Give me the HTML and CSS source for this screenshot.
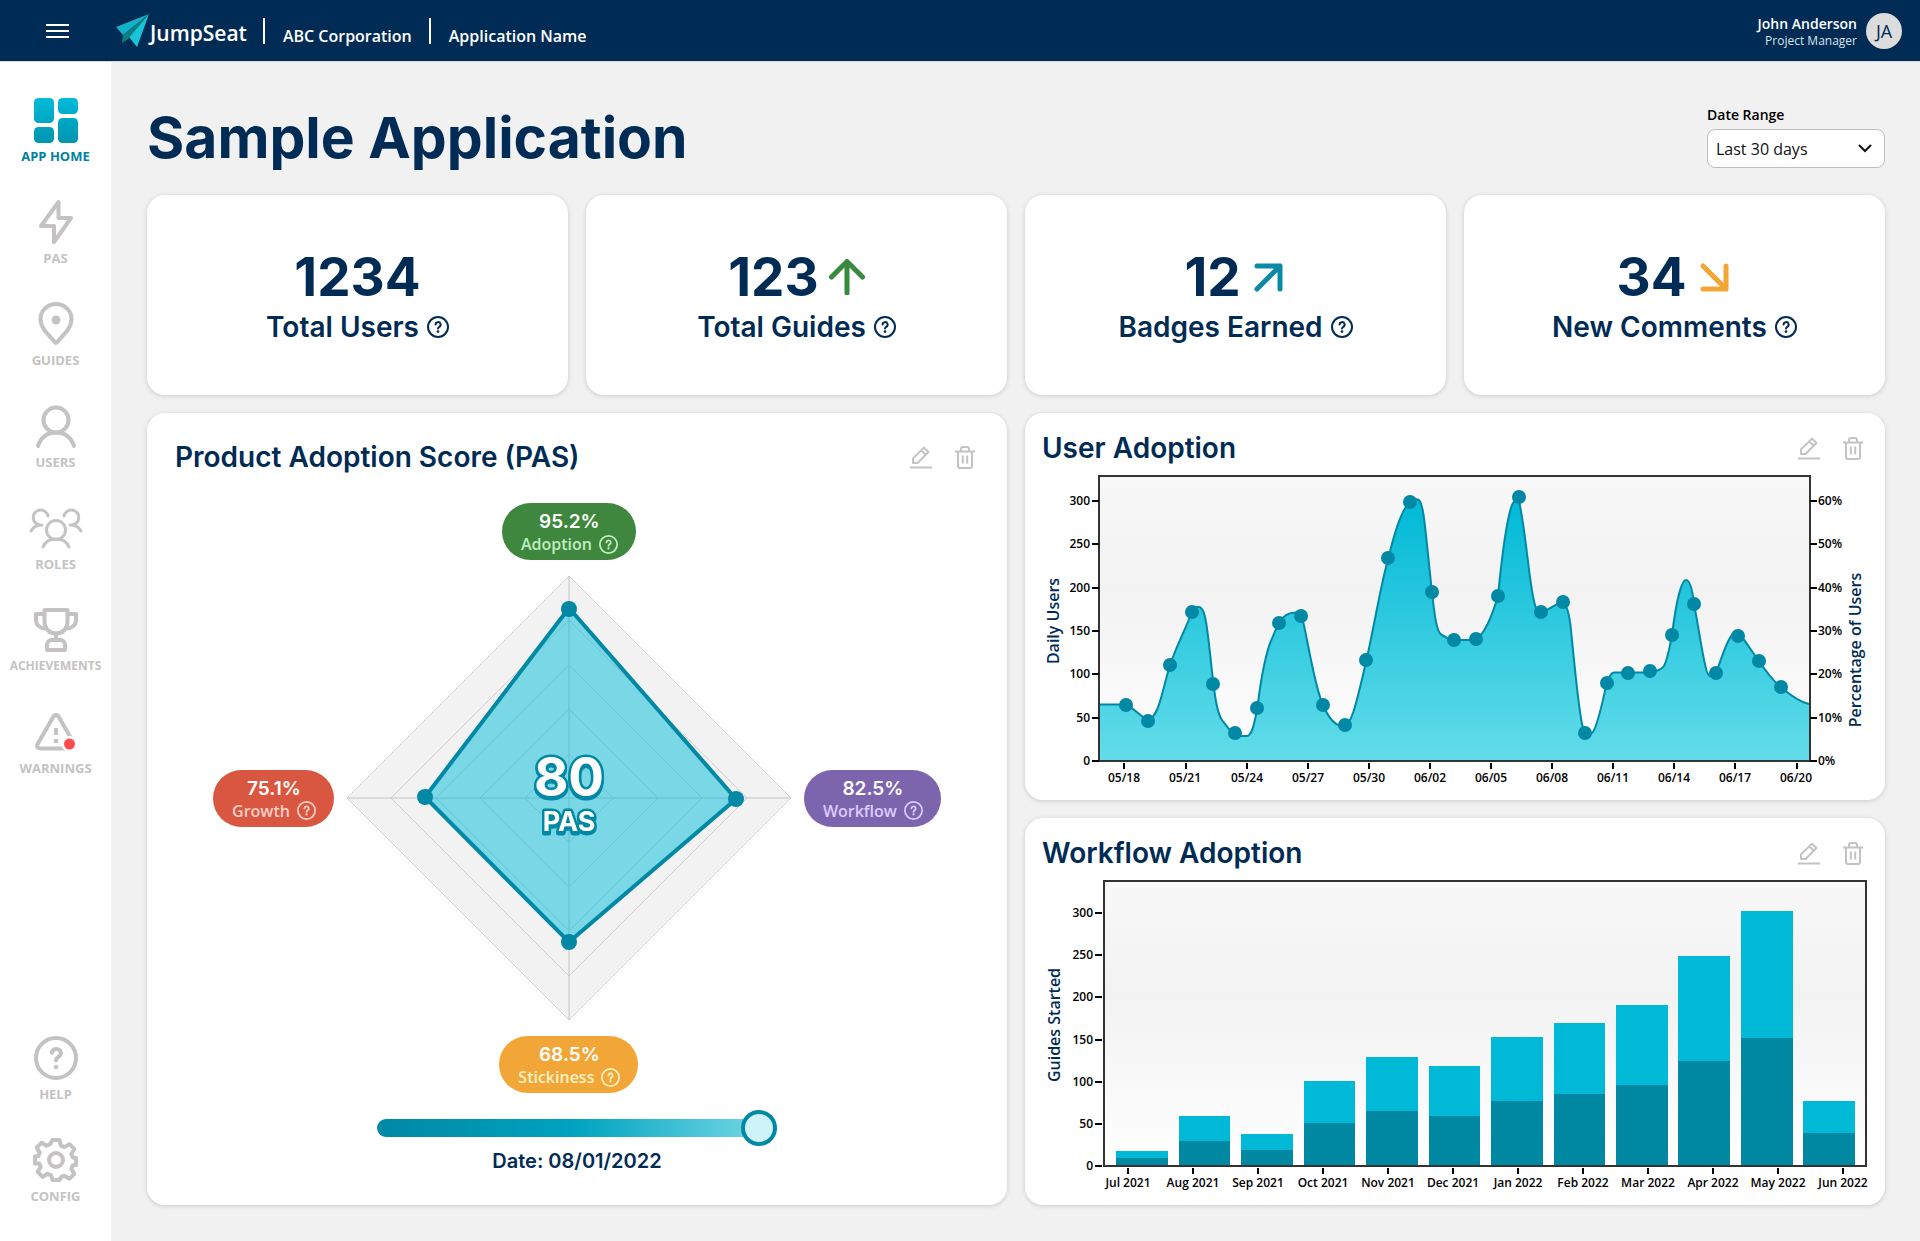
FILE: index.html
```html
<!DOCTYPE html>
<html lang="en">
<head>
<meta charset="utf-8">
<meta name="viewport" content="width=device-width, initial-scale=1">
<title>JumpSeat – Sample Application</title>
<link rel="stylesheet" href="styles.css">
</head>
<body>
<svg class="sprite" aria-hidden="true">
  <defs>
    <linearGradient id="homeFill" gradientUnits="userSpaceOnUse" x1="0" y1="0" x2="0" y2="44"><stop offset="0" stop-color="#00bbd9"/><stop offset="1" stop-color="#0095b1"/></linearGradient>
    <linearGradient id="plotBg" x1="0" y1="0" x2="0" y2="1"><stop offset="0" stop-color="#f8f8f8"/><stop offset=".4" stop-color="#f2f2f2"/><stop offset="1" stop-color="#fff"/></linearGradient>
    <linearGradient id="areaFill" x1="0" y1="0" x2="0" y2="1"><stop offset="0" stop-color="#00b9d6"/><stop offset="1" stop-color="#63dce9"/></linearGradient>
  </defs>
  <symbol id="i-help" viewBox="0 0 22 22"><g fill="none" stroke="currentColor" stroke-width="2" stroke-linecap="round"><circle cx="11" cy="11" r="10"/><path d="M8.6 8.6a2.5 2.5 0 1 1 3.7 2.2c-.9.5-1.3.9-1.3 1.8"/></g><circle cx="11" cy="15.6" r="1.3" fill="currentColor"/></symbol>
  <symbol id="i-edit" viewBox="0 0 22 23"><g fill="none" stroke="currentColor" stroke-width="2" stroke-linejoin="round"><path d="M3 17v-4.600L14 1.600l4.400 4.400L7.600 17zM11.300 4.300l4.400 4.400"/><path d="M0 21.500h22"/></g></symbol>
  <symbol id="i-trash" viewBox="0 0 20 23"><g fill="none" stroke="currentColor" stroke-width="2" stroke-linejoin="round"><path d="M0 5.500h20M6 5V3a2 2 0 0 1 2-2h4a2 2 0 0 1 2 2v2M3 5.500V20a2 2 0 0 0 2 2h10a2 2 0 0 0 2-2V5.500M7.800 9.500v8M12.200 9.500v8"/></g></symbol>
</svg>

<header class="topbar">
  <button class="menu-btn" type="button" aria-label="Menu"><svg width="24" height="16" viewBox="0 0 24 16"><path d="M0 2h23M0 8h23M0 14h23" stroke="#fff" stroke-width="2"/></svg></button>
  <a class="brand" href="#">
    <svg width="34" height="34" viewBox="0 0 34 34"><path d="M33 0 0 13l7 8z" fill="#12b3c9"/><path d="M33 0 7 21l-1 8 5-5z" fill="#0c7f83"/><path d="M33 0 11 24l3-1z" fill="#085f5e"/><path d="M33 0 13 23l8 10z" fill="#18c4da"/><path d="M33 0 6 29l6-4z" fill="#118a80"/></svg>
    <span>JumpSeat</span>
  </a>
  <nav class="crumbs" aria-label="Context"><a href="#">ABC Corporation</a><a href="#">Application Name</a></nav>
  <div class="user">
    <div class="user-text"><strong>John Anderson</strong><span>Project Manager</span></div>
    <span class="avatar">JA</span>
  </div>
</header>

<div class="layout">
  <nav class="sidebar" aria-label="Main">
    <a class="nav-item active" href="#"><svg viewBox="0 0 44 44"><g fill="url(#homeFill)"><rect x="0" y="0" width="20" height="25" rx="4.500"/><rect x="24" y="0" width="20" height="16" rx="4.500"/><rect x="0" y="29" width="20" height="16" rx="4.500"/><rect x="24" y="20" width="20" height="25" rx="4.500"/></g></svg>APP HOME</a>
    <a class="nav-item" href="#"><svg viewBox="0 0 44 44"><path d="M24.500 2v16H37L20 42V26H7z"/></svg>PAS</a>
    <a class="nav-item" href="#"><svg viewBox="0 0 44 44"><path d="M22 41C15 33.500 6.500 26.500 6.500 17a15.500 15 0 0 1 31 0C37.500 26.500 29 33.500 22 41z"/><circle cx="22" cy="18" r="4.500" class="solid"/></svg>GUIDES</a>
    <a class="nav-item" href="#"><svg viewBox="0 0 44 44"><circle cx="22" cy="16" r="12.500"/><path d="M4 42c3-9 9-13.500 18-13.500S37 33 40 42" stroke-linecap="round"/></svg>USERS</a>
    <a class="nav-item" href="#"><svg class="wide" viewBox="0 0 54 44"><g class="thin"><circle cx="27" cy="24" r="9.500"/><path d="M14 41c2-5 6-8 13-8s11 3 13 8M19 10a7.500 7.500 0 1 0-8 9M2 25c2-4 5-6 11-6M35 10a7.500 7.500 0 1 1 8 9M52 25c-2-4-5-6-11-6"/></g></svg>ROLES</a>
    <a class="nav-item long" href="#"><svg viewBox="0 0 44 44"><path d="M10.500 2h23v11c0 8-5 12.500-11.500 12.500S10.500 21 10.500 13zM10 6H2v6c0 5 4 8.500 9.500 8.500M34 6h8v6c0 5-4 8.500-9.500 8.500M22 26v6M13 42v-5c0-3 2-5 5-5h8c3 0 5 2 5 5v5z"/></svg>ACHIEVEMENTS</a>
    <a class="nav-item" href="#"><svg viewBox="0 0 44 44"><path d="M19.500 6.500 3.600 34c-1.200 2.200 0 4.400 2.400 4.400h32c2.400 0 3.600-2.200 2.400-4.400L24.500 6.500c-1.200-2-3.800-2-5 0zM22 18v7"/><path d="M20 29h4v4h-4z" class="solid"/><circle cx="35.500" cy="34" r="8" class="halo"/><circle cx="35.500" cy="34" r="5.500" class="dot"/></svg>WARNINGS</a>
    <a class="nav-item bottom" href="#"><svg viewBox="0 0 44 44"><circle cx="22" cy="22" r="20"/><path d="M17.800 16.800c.6-2.500 2.400-3.800 4.600-3.800 2.600 0 4.600 1.800 4.600 4.200 0 3.800-5 3.700-5 7.300" stroke-linecap="round"/><circle cx="22" cy="31" r="2.300" class="solid"/></svg>HELP</a>
    <a class="nav-item" href="#"><svg viewBox="0 0 44 44"><path d="M18.500 2h7l1.400 5.600 3.500 1.500 5-3 4.900 4.900-3 5 1.500 3.500 3.200.4v7l-3.200.4-1.500 3.500 3 5-4.900 4.900-5-3-3.500 1.500L25.500 42h-7l-1.400-4.700-3.500-1.500-5 3-4.900-4.900 3-5-1.500-3.500L1 25.500v-7l3.200-.4 1.500-3.500-3-5 4.900-4.900 5 3 3.500-1.500z"/><circle cx="22" cy="22" r="7"/></svg>CONFIG</a>
  </nav>

  <main class="main">
    <div class="page-head">
      <h1>Sample Application</h1>
      <div class="range">
        <label for="range">Date Range</label>
        <div class="select-box">
          <select id="range"><option>Last 30 days</option><option>Last 60 days</option><option>Last 90 days</option></select>
          <svg width="14" height="9" viewBox="0 0 14 9" aria-hidden="true"><path d="M1.500 1.500 7 7l5.500-5.500" fill="none" stroke="#111" stroke-width="2" stroke-linecap="round"/></svg>
        </div>
      </div>
    </div>

    <div class="grid">
      <section class="card stat">
        <div class="value">1234</div>
        <div class="caption">Total Users <button type="button" class="help" aria-label="About total users"><svg><use href="#i-help"/></svg></button></div>
      </section>
      <section class="card stat">
        <div class="value">123 <svg class="up" viewBox="0 0 36 36"><path d="M18 34V2.500M2.500 18 18 2.500 33.500 18"/></svg></div>
        <div class="caption">Total Guides <button type="button" class="help" aria-label="About total guides"><svg><use href="#i-help"/></svg></button></div>
      </section>
      <section class="card stat">
        <div class="value">12 <svg class="flat" viewBox="0 0 36 36"><path d="M6 30 29 7M6 7h23v23"/></svg></div>
        <div class="caption">Badges Earned <button type="button" class="help" aria-label="About badges earned"><svg><use href="#i-help"/></svg></button></div>
      </section>
      <section class="card stat">
        <div class="value">34 <svg class="down" viewBox="0 0 36 36"><path d="M6 7l23 23M6 30h23V7"/></svg></div>
        <div class="caption">New Comments <button type="button" class="help" aria-label="About new comments"><svg><use href="#i-help"/></svg></button></div>
      </section>

      <section class="card pas">
        <div class="card-head">
          <h2>Product Adoption Score (PAS)</h2>
          <button type="button" class="tool" aria-label="Edit"><svg width="22" height="23"><use href="#i-edit"/></svg></button>
          <button type="button" class="tool" aria-label="Delete"><svg width="20" height="23"><use href="#i-trash"/></svg></button>
        </div>
        <div class="radar-grid">
          <div class="pill adoption"><strong>95.2%</strong><span>Adoption <svg><use href="#i-help"/></svg></span></div>
          <div class="pill growth"><strong>75.1%</strong><span>Growth <svg><use href="#i-help"/></svg></span></div>
          <svg class="radar" viewBox="0 0 444 444" role="img" aria-label="PAS 80">
            <g fill="#f2f2f2" stroke="#d3d1d1">
              <path d="M222 0 444 222 222 444 0 222z"/>
              <path d="M222 44 400 222 222 400 44 222zM222 89 355 222 222 355 89 222zM222 133 311 222 222 311 133 222zM222 178 266 222 222 266 178 222z" fill="none"/>
              <path d="M222 0v444M0 222h444" stroke="#c4c4c4"/>
            </g>
            <path d="M222 32 389 223 222 366 78 221z" fill="#00bbd9" fill-opacity=".5" stroke="#0088a5" stroke-width="4"/>
            <g fill="#0088a5"><circle cx="222" cy="33" r="8"/><circle cx="389" cy="223" r="8"/><circle cx="222" cy="366" r="8"/><circle cx="78" cy="221" r="8"/></g>
            <g class="score"><text x="222" y="220" class="score-value">80</text><text x="222" y="255" class="score-name">PAS</text></g>
          </svg>
          <div class="pill workflow"><strong>82.5%</strong><span>Workflow <svg><use href="#i-help"/></svg></span></div>
          <div class="pill stickiness"><strong>68.5%</strong><span>Stickiness <svg><use href="#i-help"/></svg></span></div>
        </div>
        <div class="timeline">
          <input id="date" type="range" min="0" max="100" value="100">
          <label for="date">Date: 08/01/2022</label>
        </div>
      </section>

      <div class="charts">
        <section class="card">
          <div class="card-head">
            <h2>User Adoption</h2>
            <button type="button" class="tool" aria-label="Edit"><svg width="22" height="23"><use href="#i-edit"/></svg></button>
            <button type="button" class="tool" aria-label="Delete"><svg width="20" height="23"><use href="#i-trash"/></svg></button>
          </div>
          <svg class="chart" viewBox="0 0 860 330" role="img" aria-label="Daily users">
            <rect x="74" y="6" width="710" height="285" fill="url(#plotBg)"/>
            <path fill="url(#areaFill)" d="M74 234.500H99C108 236 114 246 123 250C134 247 137 221 145 195C152 175 160 160 167 142C169 138 170 137 173 137C178 136 180 146 181 152C184 170 186 195 188.500 214C191 236 194 246 197 250C203 258 207 264 213 266H222C228 266 230 248 232.500 238C236 205 242 180 246 171C249 163 252 157 254 153C258 145 264 142.500 271 142.500C274 142.500 276 143 277 147C283 170 289 215 298 235C304 249 311 256 318 256C326 256 330 240 341.500 190C350 152 357 108 363.500 88C370 60 378 38 385 32C388 29 391 29 393 29.500C399 31 400 60 407 122C410 150 412 163 417 165C421 167 424 170 429 170H451C460 163 468 143 473 126C477 85 482 48 487 35C491 27 494 28 495 36C502 70 505 125 511 138C513 142 514 142.500 516 142.500C524 140 530 134 538 132C543 136 545 150 546 160C550 200 554 245 558 258C561 266 565 265 568 262C574 252 578 228 582 213C584 206 587 202.500 589 202.500H622C632 201 636 200 639 196C643 188 645 175 647 165C652 125 657 110 661 110C666 110 668 125 669 134C675 165 678 190 682 202C684 207 686 208 691 203C697 187 702 170 707 165C710 163 713 164 716 166C722 173 727 182 734 191C742 203 748 211 756 217C765 225 775 232 784 234V290H74z"/>
            <path fill="none" stroke="#0088a5" stroke-width="2" d="M74 234.500H99C108 236 114 246 123 250C134 247 137 221 145 195C152 175 160 160 167 142C169 138 170 137 173 137C178 136 180 146 181 152C184 170 186 195 188.500 214C191 236 194 246 197 250C203 258 207 264 213 266H222C228 266 230 248 232.500 238C236 205 242 180 246 171C249 163 252 157 254 153C258 145 264 142.500 271 142.500C274 142.500 276 143 277 147C283 170 289 215 298 235C304 249 311 256 318 256C326 256 330 240 341.500 190C350 152 357 108 363.500 88C370 60 378 38 385 32C388 29 391 29 393 29.500C399 31 400 60 407 122C410 150 412 163 417 165C421 167 424 170 429 170H451C460 163 468 143 473 126C477 85 482 48 487 35C491 27 494 28 495 36C502 70 505 125 511 138C513 142 514 142.500 516 142.500C524 140 530 134 538 132C543 136 545 150 546 160C550 200 554 245 558 258C561 266 565 265 568 262C574 252 578 228 582 213C584 206 587 202.500 589 202.500H622C632 201 636 200 639 196C643 188 645 175 647 165C652 125 657 110 661 110C666 110 668 125 669 134C675 165 678 190 682 202C684 207 686 208 691 203C697 187 702 170 707 165C710 163 713 164 716 166C722 173 727 182 734 191C742 203 748 211 756 217C765 225 775 232 784 234"/>
            <g fill="#0088a5"><circle cx="101" cy="235" r="7"/><circle cx="123" cy="251" r="7"/><circle cx="145" cy="195" r="7"/><circle cx="167" cy="142" r="7"/><circle cx="188" cy="214" r="7"/><circle cx="210" cy="263" r="7"/><circle cx="232" cy="238" r="7"/><circle cx="254" cy="153" r="7"/><circle cx="276" cy="146" r="7"/><circle cx="298" cy="235" r="7"/><circle cx="320" cy="255" r="7"/><circle cx="341" cy="190" r="7"/><circle cx="363" cy="88" r="7"/><circle cx="385" cy="32" r="7"/><circle cx="407" cy="122" r="7"/><circle cx="429" cy="170" r="7"/><circle cx="451" cy="169" r="7"/><circle cx="473" cy="126" r="7"/><circle cx="494" cy="27" r="7"/><circle cx="516" cy="142" r="7"/><circle cx="538" cy="132" r="7"/><circle cx="560" cy="263" r="7"/><circle cx="582" cy="213" r="7"/><circle cx="603" cy="203" r="7"/><circle cx="625" cy="201" r="7"/><circle cx="647" cy="165" r="7"/><circle cx="669" cy="134" r="7"/><circle cx="691" cy="203" r="7"/><circle cx="713" cy="166" r="7"/><circle cx="734" cy="191" r="7"/><circle cx="756" cy="217" r="7"/></g>
            <path d="M74 6h711v285H74z" class="frame"/>
            <path d="M67 31h7M67 74h7M67 118h7M67 161h7M67 204h7M67 248h7M67 291h7M785 31h7M785 74h7M785 118h7M785 161h7M785 204h7M785 248h7M785 291h7" class="tick"/>
            <path d="M99 293v6M161 293v6M222 293v6M283 293v6M344 293v6M405 293v6M466 293v6M527 293v6M588 293v6M649 293v6M710 293v6M772 293v6" class="tick"/>
            <g class="end"><text x="65" y="35">300</text><text x="65" y="78">250</text><text x="65" y="122">200</text><text x="65" y="165">150</text><text x="65" y="208">100</text><text x="65" y="252">50</text><text x="65" y="295">0</text></g>
            <g><text x="793" y="35">60%</text><text x="793" y="78">50%</text><text x="793" y="122">40%</text><text x="793" y="165">30%</text><text x="793" y="208">20%</text><text x="793" y="252">10%</text><text x="793" y="295">0%</text></g>
            <g class="mid"><text x="99" y="312">05/18</text><text x="160" y="312">05/21</text><text x="222" y="312">05/24</text><text x="283" y="312">05/27</text><text x="344" y="312">05/30</text><text x="405" y="312">06/02</text><text x="466" y="312">06/05</text><text x="527" y="312">06/08</text><text x="588" y="312">06/11</text><text x="649" y="312">06/14</text><text x="710" y="312">06/17</text><text x="771" y="312">06/20</text></g>
            <text class="axis" transform="translate(34 151) rotate(-90)">Daily Users</text>
            <text class="axis" transform="translate(836 180) rotate(-90)">Percentage of Users</text>
          </svg>
        </section>

        <section class="card">
          <div class="card-head">
            <h2>Workflow Adoption</h2>
            <button type="button" class="tool" aria-label="Edit"><svg width="22" height="23"><use href="#i-edit"/></svg></button>
            <button type="button" class="tool" aria-label="Delete"><svg width="20" height="23"><use href="#i-trash"/></svg></button>
          </div>
          <svg class="chart" viewBox="0 0 860 330" role="img" aria-label="Guides started">
            <rect x="79" y="6" width="762" height="285" fill="url(#plotBg)"/>
            <path fill="#00b9d6" d="M91 276h52v14H91zM154 241h51v49h-51zM216 259h52v31h-52zM279 206h51v84h-51zM341 182h52v108h-52zM404 191h51v99h-51zM466 162h52v128h-52zM529 148h51v142h-51zM591 130h52v160h-52zM653 81h52v209h-52zM716 36h52v254h-52zM778 226h52v64h-52z"/>
            <path fill="#0088a3" d="M91 283h52v7H91zM154 266h51v24h-51zM216 275h52v15h-52zM279 248h51v42h-51zM341 236h52v54h-52zM404 241h51v49h-51zM466 226h52v64h-52zM529 219h51v71h-51zM591 210h52v80h-52zM653 186h52v104h-52zM716 163h52v127h-52zM778 258h52v32h-52z"/>
            <path d="M79 6h762v285H79z" class="frame"/>
            <path d="M70 38h7M70 80h7M70 122h7M70 165h7M70 207h7M70 249h7M70 291h7" class="tick"/>
            <path d="M103 293v6M168 293v6M233 293v6M298 293v6M363 293v6M428 293v6M493 293v6M558 293v6M623 293v6M688 293v6M753 293v6M818 293v6" class="tick"/>
            <g class="end"><text x="68" y="42">300</text><text x="68" y="84">250</text><text x="68" y="126">200</text><text x="68" y="169">150</text><text x="68" y="211">100</text><text x="68" y="253">50</text><text x="68" y="295">0</text></g>
            <g class="mid"><text x="103" y="312">Jul 2021</text><text x="168" y="312">Aug 2021</text><text x="233" y="312">Sep 2021</text><text x="298" y="312">Oct 2021</text><text x="363" y="312">Nov 2021</text><text x="428" y="312">Dec 2021</text><text x="493" y="312">Jan 2022</text><text x="558" y="312">Feb 2022</text><text x="623" y="312">Mar 2022</text><text x="688" y="312">Apr 2022</text><text x="753" y="312">May 2022</text><text x="818" y="312">Jun 2022</text></g>
            <text class="axis" transform="translate(35 150) rotate(-90)">Guides Started</text>
          </svg>
        </section>
      </div>
    </div>
  </main>
</div>
</body>
</html>
```
FILE: styles.css
```css
:root {
  --navy: #002b54;
  --teal: #0088a5;
  --muted: #c4c2c2;
  --display: Inter, "Open Sans", sans-serif;
}

* { box-sizing: border-box; }

body {
  margin: 0;
  min-height: 100vh;
  display: flex;
  flex-direction: column;
  background: #f1f1f1;
  color: #000;
  font-family: "Open Sans", sans-serif;
  font-size: 16px;
}

a { color: inherit; text-decoration: none; }

button {
  padding: 0;
  border: 0;
  background: none;
  color: inherit;
  cursor: pointer;
}

svg { display: block; flex: none; }

.sprite { position: absolute; width: 0; height: 0; }

/* Top bar */
.topbar {
  display: flex;
  align-items: center;
  height: 62px;
  padding: 0 18px 0 46px;
  background: var(--navy);
  border-bottom: 1px solid #d5dbe3;
  color: #fff;
}

.brand {
  display: flex;
  align-items: center;
  margin-left: 46px;
  font-size: 21px;
  font-weight: 600;
  line-height: 28px;
}

.brand span { padding-top: 4px; }

.crumbs { display: flex; margin-left: 16px; }

.crumbs a {
  padding: 10px 17px 0 18px;
  border-left: 2px solid #fff;
  font-weight: 600;
  line-height: 16px;
}

.user { display: flex; align-items: center; gap: 9px; margin-left: auto; }

.user-text {
  display: flex;
  flex-direction: column;
  padding-top: 2px;
  text-align: right;
  font-size: 12px;
  line-height: 17px;
}

.user-text strong { font-size: 14px; font-weight: 600; }
.user-text span { color: #dbe2e9; }

.avatar {
  width: 36px;
  height: 36px;
  border-radius: 50%;
  background: #dcdcdc;
  color: var(--navy);
  font-size: 18px;
  font-weight: 400;
  line-height: 36px;
  text-align: center;
}

/* Sidebar */
.layout { display: flex; flex: 1; }

.sidebar {
  display: flex;
  flex-direction: column;
  flex: none;
  width: 111px;
  gap: 35px;
  padding: 36px 0 36px;
  background: #fff;
}

.nav-item {
  display: flex;
  flex-direction: column;
  align-items: center;
  gap: 5px;
  color: var(--muted);
  font-size: 13px;
  font-weight: 700;
  line-height: 18px;
}

.nav-item.long { font-size: 12px; }

.nav-item svg {
  width: 44px;
  height: 44px;
  overflow: visible;
  fill: none;
  stroke: currentColor;
  stroke-width: 4;
  stroke-linejoin: round;
}

.nav-item .wide { width: 54px; stroke-linecap: round; }
.nav-item .thin { stroke-width: 3; }
.nav-item .solid { fill: currentColor; stroke: none; }
.nav-item .halo { fill: #fff; stroke: none; }
.nav-item .dot { fill: #ff4b4f; stroke: none; }
.nav-item.active { color: #00829d; }
.nav-item.active svg { stroke: none; }
.nav-item.bottom { margin-top: auto; }

/* Page */
.main { flex: 1; min-width: 0; padding: 43px 35px 36px 36px; }

.page-head {
  display: flex;
  justify-content: space-between;
  align-items: flex-end;
  padding-bottom: 27px;
}

h1, h2 { margin: 0; color: var(--navy); font-family: var(--display); }

h1 { font-size: 57px; font-weight: 700; line-height: 60px; }

h2 { flex: 1; font-size: 28px; font-weight: 600; line-height: 36px; }

.range { display: flex; flex-direction: column; gap: 4px; width: 178px; }
.range label { font-size: 14px; font-weight: 600; line-height: 20px; }

.select-box { display: grid; align-items: center; }

.select-box select,
.select-box svg { grid-area: 1 / 1; }

.select-box svg { justify-self: end; margin-right: 13px; pointer-events: none; }

.select-box select {
  appearance: none;
  width: 100%;
  height: 39px;
  padding: 0 8px;
  border: 1px solid #bdbdbd;
  border-radius: 8px;
  background: #fff;
  color: #111;
  font: 16px "Open Sans", sans-serif;
}

.grid {
  display: grid;
  grid-template-columns: repeat(4, 1fr);
  gap: 18px;
}

.card {
  border-radius: 18px;
  background: #fff;
  box-shadow: 0 1px 5px rgba(0, 0, 0, .16);
}

/* Stats */
.stat {
  display: flex;
  flex-direction: column;
  align-items: center;
  gap: 2px;
  padding: 54px 0 48px;
  color: var(--navy);
  font-family: var(--display);
}

.value {
  display: flex;
  align-items: center;
  gap: 10px;
  font-size: 53px;
  font-weight: 700;
  line-height: 56px;
}

.value svg {
  width: 36px;
  height: 36px;
  fill: none;
  stroke: currentColor;
  stroke-width: 5;
  stroke-linecap: round;
  stroke-linejoin: round;
}

.up { color: #3a8a3e; }
.flat { color: #0c89a5; }
.down { color: #f4a534; }

.caption {
  display: flex;
  align-items: center;
  gap: 8px;
  font-size: 28px;
  font-weight: 600;
  line-height: 40px;
}

.help svg { width: 22px; height: 22px; }

/* Card headings */
.card-head {
  display: flex;
  align-items: center;
  padding: 17px 22px 4px 17px;
}

.tool { margin-left: 23px; color: var(--muted); }

/* Adoption score */
.pas {
  display: flex;
  flex-direction: column;
  grid-column: span 2;
}

.pas .card-head { padding: 26px 32px 28px 28px; }

.radar-grid {
  display: grid;
  grid-template-columns: auto minmax(0, 444px) auto;
  grid-template-areas: ". top ." "left radar right" ". bottom .";
  gap: 16px 13px;
  align-items: center;
  justify-content: center;
  justify-items: center;
}

.radar { grid-area: radar; width: 100%; overflow: visible; }

.pill {
  padding: 8px 18px 5px 19px;
  border-radius: 29px;
  text-align: center;
}

.pill strong {
  display: block;
  color: #fff;
  font: 600 19px/22px var(--display);
}

.pill span {
  display: flex;
  align-items: center;
  gap: 7px;
  font-size: 16px;
  font-weight: 600;
  line-height: 22px;
}

.pill svg { width: 19px; height: 19px; }

.adoption { grid-area: top; background: #3f873f; color: #bfeebf; }
.growth { grid-area: left; background: #d95740; color: #ffd0c6; }
.workflow { grid-area: right; background: #7d65ae; color: #dccbff; }
.stickiness { grid-area: bottom; background: #f3a638; color: #fff2c4; }

.score {
  fill: #fff;
  stroke: var(--teal);
  stroke-width: 5;
  stroke-linejoin: round;
  paint-order: stroke;
  filter: drop-shadow(0 2px 0 var(--teal));
  font-family: var(--display);
  font-weight: 700;
  text-anchor: middle;
}

.score-value { font-size: 53px; }
.score-name { font-size: 27px; }

.timeline {
  display: flex;
  flex-direction: column;
  align-items: center;
  gap: 2px;
  margin-top: 18px;
}

.timeline label {
  color: var(--navy);
  font: 600 20px/28px var(--display);
}

.timeline input {
  appearance: none;
  width: 400px;
  max-width: 80%;
  height: 34px;
  margin: 0;
  background: none;
}

.timeline input::-webkit-slider-runnable-track {
  height: 18px;
  border-radius: 9px;
  background: linear-gradient(90deg, #0088a5, #00a3c0 50%, #7ddbe7);
}

.timeline input::-webkit-slider-thumb {
  appearance: none;
  width: 36px;
  height: 36px;
  margin-top: -9px;
  border: 4px solid var(--teal);
  border-radius: 50%;
  background: #cdf2f8;
}

/* Charts */
.charts {
  display: flex;
  flex-direction: column;
  grid-column: span 2;
  gap: 18px;
}

.chart { width: 100%; height: auto; }

.chart text {
  font-family: "Open Sans", sans-serif;
  font-size: 12px;
  font-weight: 600;
}

.chart .end { text-anchor: end; }
.chart .mid { text-anchor: middle; }

.chart .axis {
  fill: var(--navy);
  font-size: 16px;
  text-anchor: middle;
}

.frame { fill: none; stroke: #333; stroke-width: 2; }
.tick { stroke: #000; stroke-width: 2; }
```
